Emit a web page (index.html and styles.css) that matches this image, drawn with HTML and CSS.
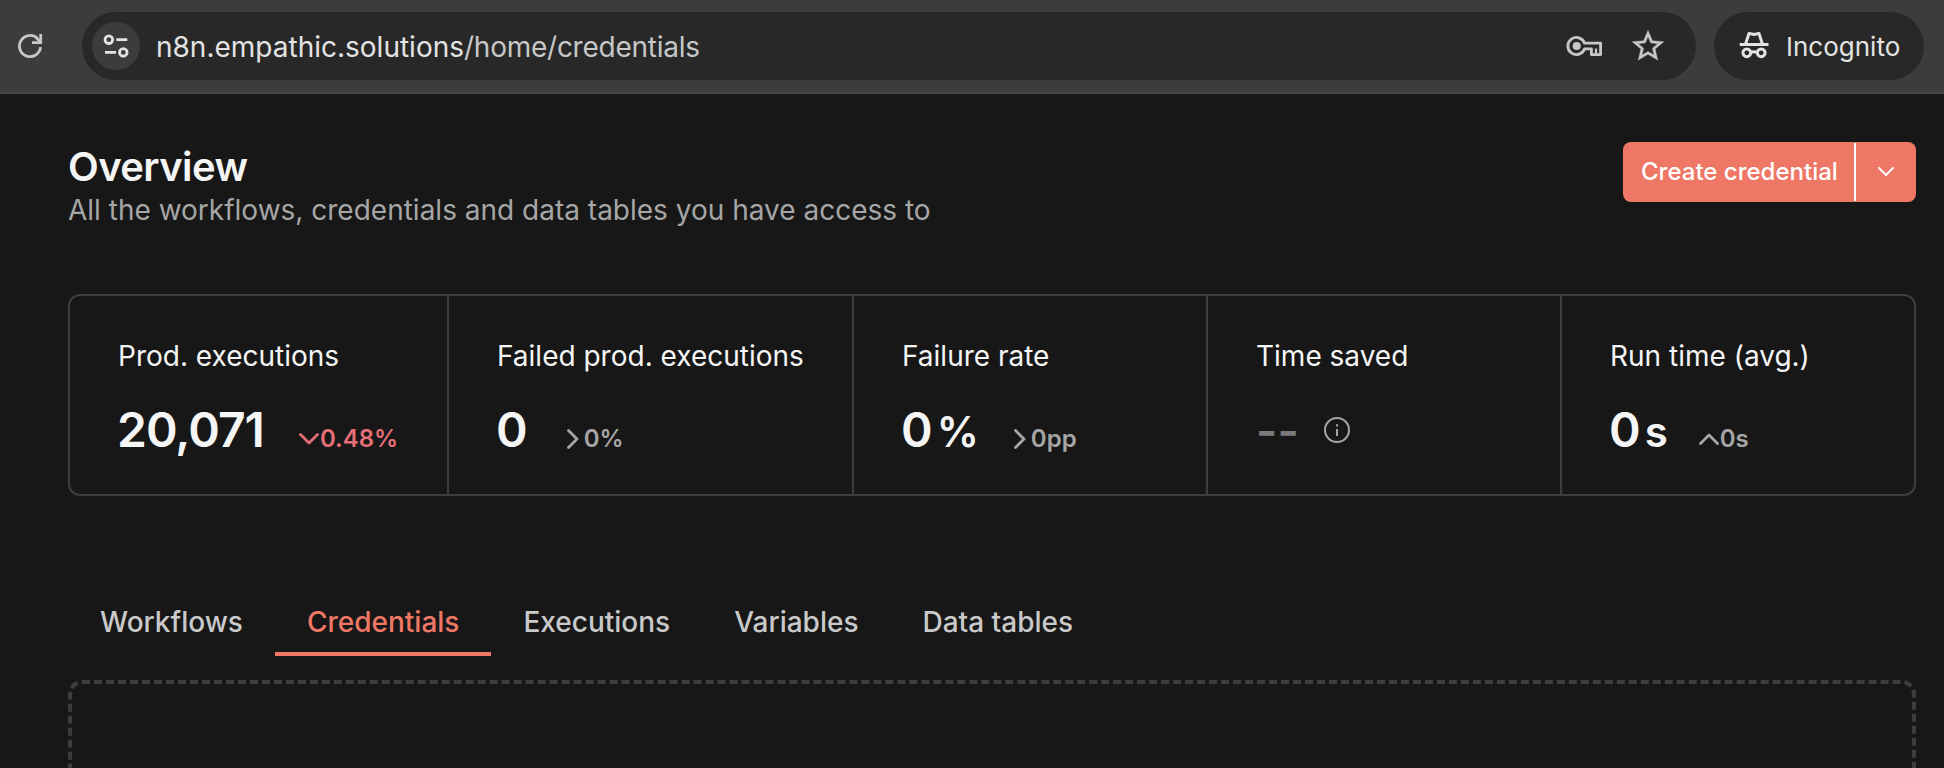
FILE: index.html
```html
<!DOCTYPE html>
<html lang="en">
  <head>
    <meta charset="UTF-8" />
    <meta name="viewport" content="width=device-width, initial-scale=1.0" />
    <title>Overview - Credentials</title>
    <link rel="stylesheet" href="styles.css">
  </head>
  <body>
    <div class="toolbar">
      <svg class="reload" viewBox="0 0 28 28" fill="none" stroke="currentColor" stroke-width="2.8">
        <path d="M24.6 15.2A10.6 10.6 0 1 1 21.3 6.3" />
        <path d="M24.7 2v8.7H16" />
        <path d="M20 5.5l4 4" />
      </svg>
      <div class="address">
        <div class="site-info">
          <svg viewBox="0 0 28 28" fill="none" stroke="currentColor" stroke-width="2.8">
            <circle cx="6.8" cy="7.7" r="3.8" />
            <path d="M14.3 7.7h11M3 20.4h11" />
            <circle cx="21.3" cy="20.4" r="3.8" />
          </svg>
        </div>
        <div class="url">n8n.empathic.solutions<span>/home/credentials</span></div>
        <svg class="key" viewBox="0 0 38 24" fill="none" stroke="currentColor" stroke-width="2.8">
          <path d="M19.6 9.2A8.6 8.6 0 1 0 19.6 14.8H26.4V20.6H35.6V9.2Z" stroke-linejoin="round" />
          <path d="M31 14.5v6" stroke-width="2.2" />
          <circle cx="11.7" cy="12" r="4.1" fill="currentColor" stroke="none" />
        </svg>
        <svg class="star" viewBox="0 0 24 24" fill="currentColor" stroke="currentColor" stroke-width=".2">
          <path d="M22 9.24l-7.19-.62L12 2 9.19 8.63 2 9.24l5.46 4.73L5.82 21 12 17.27 18.18 21l-1.63-7.03L22 9.24zM12 15.4l-3.76 2.27 1-4.28-3.32-2.88 4.38-.38L12 6.1l1.71 4.04 4.38.38-3.32 2.88 1 4.28L12 15.4z" />
        </svg>
      </div>
      <div class="incognito">
        <svg viewBox="0 0 30 30" fill="none" stroke="currentColor" stroke-width="3">
          <path d="M.7 13.5h28.8" />
          <path d="M6.6 13L10 2.4l5 1.1 5-1.1L23.4 13" stroke-linejoin="round" />
          <circle cx="7.8" cy="21.8" r="3.9" />
          <circle cx="22.2" cy="21.8" r="3.9" />
          <path d="M11.7 21.5q3.3-1.6 6.6 0" />
        </svg>
        <span>Incognito</span>
      </div>
    </div>

    <main class="page">
      <header class="header">
        <div>
          <h1>Overview</h1>
          <p>All the workflows, credentials and data tables you have access to</p>
        </div>
        <div class="create">
          <button class="create-main">Create credential</button>
          <button class="create-more" aria-label="More">
            <svg viewBox="0 0 18 12" fill="none" stroke="currentColor" stroke-width="2" stroke-linecap="round" stroke-linejoin="round">
              <path d="M2 2l7 7 7-7" />
            </svg>
          </button>
        </div>
      </header>

      <section class="summary">
        <div class="card">
          <div class="label">Prod. executions</div>
          <div class="row">
            <span class="value">20,071</span>
            <span class="change down">
              <svg class="wide" viewBox="0 0 20 12"><path d="M1.5 1.5L10 10l8.5-8.5" /></svg>0.48%
            </span>
          </div>
        </div>
        <div class="card">
          <div class="label">Failed prod. executions</div>
          <div class="row">
            <span class="value">0</span>
            <span class="change zero">
              <svg class="tall" viewBox="0 0 12 20"><path d="M1.5 1.5L10 10l-8.5 8.5" /></svg>0%
            </span>
          </div>
        </div>
        <div class="card">
          <div class="label">Failure rate</div>
          <div class="row">
            <span class="value">0<em>%</em></span>
            <span class="change rate">
              <svg class="tall" viewBox="0 0 12 20"><path d="M1.5 1.5L10 10l-8.5 8.5" /></svg>0pp
            </span>
          </div>
        </div>
        <div class="card">
          <div class="label">Time saved</div>
          <div class="row">
            <span class="empty">--</span>
            <svg class="info" viewBox="0 0 26 26" fill="none" stroke="currentColor" stroke-width="2">
              <circle cx="13" cy="13" r="12" />
              <path d="M13 12v7M13 7.2v2.2" />
            </svg>
          </div>
        </div>
        <div class="card">
          <div class="label">Run time (avg.)</div>
          <div class="row">
            <span class="value">0<em>s</em></span>
            <span class="change time">
              <svg class="wide" viewBox="0 0 20 12"><path d="M1.5 10.5L10 2l8.5 8.5" /></svg>0s
            </span>
          </div>
        </div>
      </section>

      <nav class="tabs">
        <a class="tab">Workflows</a>
        <a class="tab active">Credentials</a>
        <a class="tab">Executions</a>
        <a class="tab">Variables</a>
        <a class="tab">Data tables</a>
      </nav>

      <div class="empty-box"></div>
    </main>
  </body>
</html>
```
FILE: styles.css
```css
* {
  box-sizing: border-box;
}

body {
  margin: 0;
  height: 100vh;
  display: flex;
  flex-direction: column;
  background-color: #171717;
  color: #f5f5f5;
  font-family: Inter, "Liberation Sans", sans-serif;
}

svg {
  display: block;
  flex: none;
}

/* browser bar */
.toolbar {
  display: flex;
  align-items: center;
  flex: none;
  height: 94px;
  padding: 0 20px 0 16px;
  background-color: #3c3c3c;
  border-bottom: 2px solid #474747;
  font-size: 28px;
}

.reload {
  width: 28px;
  height: 28px;
  margin-right: 38px;
  color: #c7c7c7;
}

.address {
  display: flex;
  align-items: center;
  width: 1614px;
  height: 68px;
  padding: 0 29px 0 10px;
  margin-right: 18px;
  border-radius: 34px;
  background-color: #282828;
}

.site-info {
  display: flex;
  align-items: center;
  justify-content: center;
  width: 48px;
  height: 48px;
  border-radius: 50%;
  background-color: #3c3c3c;
  color: #e3e3e3;
}

.site-info svg {
  width: 28px;
  height: 28px;
}

.url {
  flex: 1;
  margin-left: 16px;
  padding-top: 1px;
  color: #e3e3e3;
}

.url span {
  letter-spacing: -0.25px;
  color: #c7c7c7;
}

.key {
  width: 38px;
  height: 24px;
  margin-right: 26px;
  color: #c7c7c7;
}

.star {
  width: 38px;
  height: 38px;
  color: #c7c7c7;
}

.incognito {
  display: flex;
  align-items: center;
  width: 210px;
  height: 68px;
  padding-left: 25px;
  border-radius: 34px;
  background-color: #282828;
  color: #e3e3e3;
  font-size: 26px;
}

.incognito svg {
  width: 30px;
  height: 30px;
  margin-right: 17px;
}

.incognito span {
  padding-top: 1px;
}

/* page */
.page {
  flex: 1;
  display: flex;
  flex-direction: column;
  padding: 48px 28px 0 68px;
}

.header {
  display: flex;
  justify-content: space-between;
  height: 152px;
}

h1 {
  margin: 0;
  font-size: 40px;
  font-weight: 600;
  line-height: 50px;
  letter-spacing: -0.6px;
}

.header p {
  margin: 0;
  font-size: 28px;
  line-height: 36px;
  color: #a6a6a6;
}

.create {
  display: flex;
  width: 293px;
  height: 60px;
  border-radius: 8px;
  overflow: hidden;
  background-color: #ee7765;
}

.create button {
  border: none;
  padding: 0;
  background: none;
  color: #fff;
  font: 500 24px Inter, sans-serif;
}

.create .create-main {
  width: 231px;
  padding: 0 0 2px 18px;
  text-align: left;
}

.create .create-more {
  display: flex;
  align-items: center;
  justify-content: center;
  flex: 1;
  margin: 1px 0;
  border-left: 2px solid #fff;
}

.create-more svg {
  width: 18px;
  height: 12px;
}

.summary {
  display: grid;
  grid-template-columns: 379px 405px 354px 354px 352px;
  height: 202px;
  border: 2px solid #3d3d3d;
  border-radius: 12px;
}

.card {
  padding: 43px 0 0 48px;
  border-right: 2px solid #3d3d3d;
}

.card:last-child {
  border-right: none;
}

.label {
  font-size: 28px;
  line-height: 34px;
}

.row {
  display: flex;
  align-items: baseline;
  height: 58px;
  margin-top: 28px;
}

.value {
  margin-left: -1px;
  font-size: 48px;
  font-weight: 600;
  line-height: 58px;
  letter-spacing: -1px;
}

.value em {
  margin-left: 5px;
  font-size: 42px;
  font-style: normal;
}

.change {
  margin-left: 35px;
  font-size: 24px;
  font-weight: 600;
  color: #a6a6a6;
}

.change svg {
  display: inline-block;
  fill: none;
  stroke: currentColor;
  stroke-width: 2.8;
  stroke-linecap: round;
  stroke-linejoin: round;
}

.change .wide {
  width: 20px;
  height: 12px;
  margin-right: 1px;
  vertical-align: 2px;
}

.change .tall {
  width: 12px;
  height: 20px;
  margin-right: 5px;
  vertical-align: -2px;
}

.down {
  color: #e66e75;
}

.zero {
  margin-left: 40px;
}

.rate {
  margin-left: 36px;
}

.time {
  margin-left: 32px;
}

.empty {
  font-size: 46px;
  font-weight: 600;
  line-height: 58px;
  color: #7a7a7a;
}

.info {
  align-self: center;
  width: 26px;
  height: 26px;
  margin-left: 25px;
  color: #a6a6a6;
}

.tabs {
  display: flex;
  margin-top: 100px;
}

.tab {
  height: 60px;
  padding: 9px 32px 0;
  border-bottom: 4px solid transparent;
  font-size: 28px;
  font-weight: 500;
  line-height: 34px;
  color: #c9c9c9;
}

.tab.active {
  color: #ee7765;
  border-bottom-color: #ee7765;
}

.empty-box {
  flex: 1;
  margin-top: 24px;
  border: 4px dashed #3d3d3d;
  border-bottom: none;
  border-radius: 14px 14px 0 0;
}
```
